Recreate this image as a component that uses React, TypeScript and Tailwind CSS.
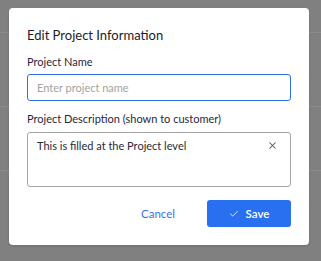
import { Check, X } from "lucide-react";

const rows = [33, 74, 64];

const EditProjectModal = () => {
  return (
    <div className="absolute left-[9px] top-[8px] flex h-[237px] w-[300px] flex-col rounded-[4px] bg-white px-[18px] pt-[18px] shadow-sm">
      <h2 className="text-[13px] font-normal leading-[18px] text-[#1a1d26]">
        Edit Project Information
      </h2>
      <label className="mt-[10px] text-[11px] leading-[16px] text-[#2a1f3d]">
        Project Name
      </label>
      <input
        autoFocus
        placeholder="Enter project name"
        className="mt-[4px] h-[27px] w-full rounded-[3px] border border-[#2f6fed] px-[9px] text-[11px] text-[#1f2430] outline-none placeholder:text-[#a3a3a3]"
      />
      <label className="mt-[10px] text-[11px] leading-[16px] text-[#2a1f3d]">
        Project Description (shown to customer)
      </label>
      <div className="mt-[5px] flex h-[55px] w-full items-start justify-between rounded-[3px] border border-[#a6a6a6] pl-[9px] pr-[12px] pt-[5px]">
        <span className="text-[11px] leading-[16px] text-[#1f2a3a]">
          This is filled at the Project level
        </span>
        <X className="mt-[2px] h-[11px] w-[11px] text-[#555]" strokeWidth={2.2} />
      </div>
      <div className="mt-[13px] flex items-center justify-end">
        <button className="mr-[32px] text-[11.5px] text-[#3b6ff0]">Cancel</button>
        <button className="flex h-[27px] w-[84px] items-center justify-center gap-[7px] rounded-[3px] bg-[#2970f0] text-[11.5px] font-semibold text-white">
          <Check className="h-[10px] w-[10px]" strokeWidth={2} />
          Save
        </button>
      </div>
    </div>
  );
};

export default function App() {
  return (
    <div
      className="relative h-[261px] w-[321px] overflow-hidden bg-[#808080]"
      style={{ fontFamily: "Lato, 'Noto Sans', sans-serif" }}
    >
      <div className="flex flex-col">
        {rows.map((h, i) => (
          <div key={i} style={{ height: h }} className="border-b border-[#8a8a8a]" />
        ))}
      </div>
      <EditProjectModal />
    </div>
  );
}
